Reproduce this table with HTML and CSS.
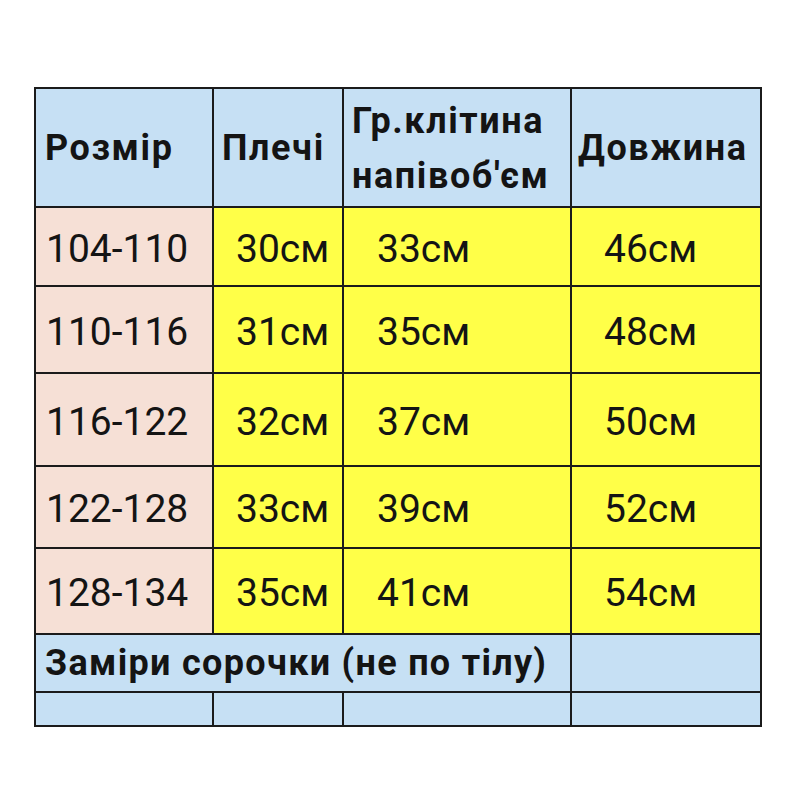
FILE: index.html
```html
<!DOCTYPE html>
<html lang="uk">
<head>
<meta charset="utf-8">
<link rel="stylesheet" href="styles.css">
</head>
<body>
<table class="sizes">
  <colgroup>
    <col class="c1"><col class="c2"><col class="c3"><col class="c4">
  </colgroup>
  <tr class="head">
    <th class="h1">Розмір</th>
    <th class="h2">Плечі</th>
    <th class="h3">Гр.клітина<br>напівоб'єм</th>
    <th class="h4">Довжина</th>
  </tr>
  <tr class="r1"><td class="size">104-110</td><td class="v2">30см</td><td class="v3">33см</td><td class="v4">46см</td></tr>
  <tr class="r2"><td class="size">110-116</td><td class="v2">31см</td><td class="v3">35см</td><td class="v4">48см</td></tr>
  <tr class="r3"><td class="size">116-122</td><td class="v2">32см</td><td class="v3">37см</td><td class="v4">50см</td></tr>
  <tr class="r4"><td class="size">122-128</td><td class="v2">33см</td><td class="v3">39см</td><td class="v4">52см</td></tr>
  <tr class="r5"><td class="size">128-134</td><td class="v2">35см</td><td class="v3">41см</td><td class="v4">54см</td></tr>
  <tr class="note"><td class="note-text" colspan="3">Заміри сорочки (не по тілу)</td><td class="blank"></td></tr>
  <tr class="last"><td class="blank"></td><td class="blank"></td><td class="blank"></td><td class="blank"></td></tr>
</table>
</body>
</html>
```
FILE: styles.css
```css
html, body {
  margin: 0;
  padding: 0;
  background: #ffffff;
}
body {
  padding: 87px 0 0 34px;
  font-family: Roboto, "Liberation Sans", sans-serif;
  color: #141414;
}
.sizes {
  border-collapse: collapse;
  table-layout: fixed;
  width: 728px;
}
.c1 { width: 178px; }
.c2 { width: 130px; }
.c3 { width: 228px; }
.c4 { width: 190px; }
.sizes th, .sizes td {
  border: 2px solid #1b1b1b;
  padding: 0;
  vertical-align: middle;
  text-align: left;
  white-space: nowrap;
  font-size: 39px;
  font-weight: 400;
}
.sizes .head th {
  background: #c6e0f4;
  font-weight: 700;
  font-size: 36px;
  letter-spacing: 1.6px;
  line-height: 55px;
  padding-top: 2px;
}
.head { height: 119px; }
.sizes .h1 { padding-left: 9px; }
.sizes .h2 { padding-left: 8px; }
.sizes .h3 { padding-left: 8px; }
.sizes .h4 { padding-left: 6px; }
.r1 { height: 79px; }
.r2 { height: 87px; }
.r3 { height: 93px; }
.r4 { height: 82px; }
.r5 { height: 86px; }
.note { height: 58px; }
.last { height: 34px; }
.sizes .size {
  background: #f6e0d6;
  padding-left: 10px;
  padding-top: 4px;
}
.sizes .v2, .sizes .v3, .sizes .v4 {
  background: #ffff48;
  padding-top: 4px;
}
.sizes .v2 { padding-left: 22px; }
.sizes .v3 { padding-left: 33px; }
.sizes .v4 { padding-left: 32px; }
.sizes .note-text {
  background: #c6e0f4;
  font-weight: 700;
  font-size: 36px;
  letter-spacing: 1.3px;
  padding-left: 9px;
}
.sizes .blank { background: #c6e0f4; }
```
